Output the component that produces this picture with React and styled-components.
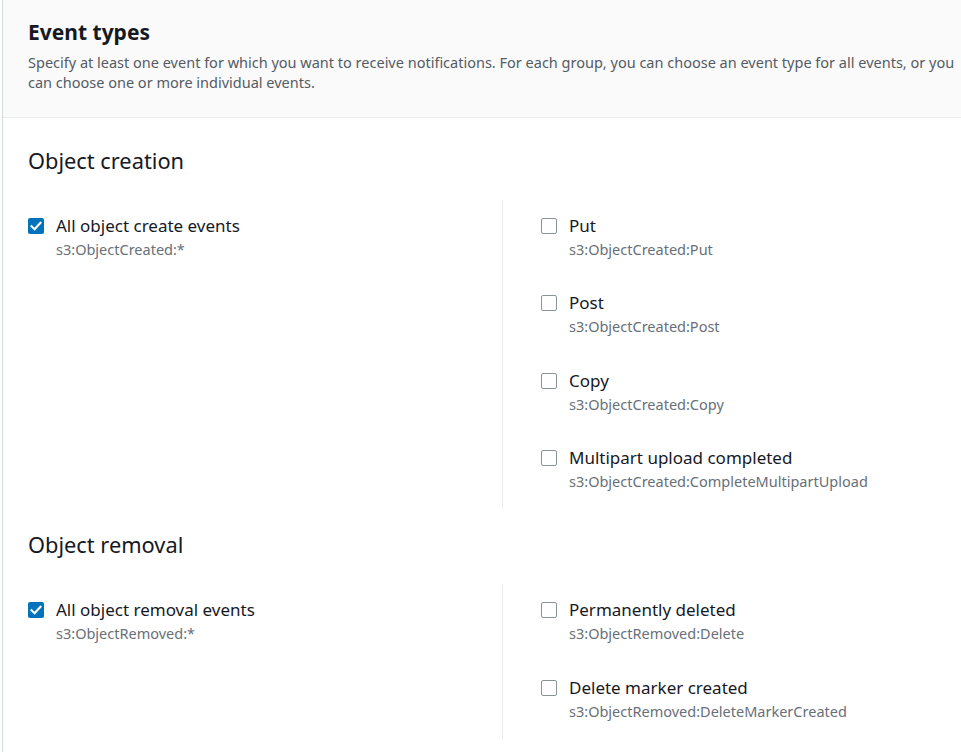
import React from "react";
import styled, { createGlobalStyle } from "styled-components";

const Global = createGlobalStyle`
  html, body { margin: 0; padding: 0; background: #ffffff; overflow: hidden; }
  body { font-family: "Noto Sans", "Open Sans", sans-serif; color: #16191f; }
  * { box-sizing: border-box; }
`;

const Card = styled.div`
  margin-left: 2px;
  width: 1000px;
  border-left: 1px solid #d5dbdb;
  min-height: 752px;
`;

const Header = styled.header`
  background: #fafafa;
  border-bottom: 1px solid #eaeded;
  padding: 18px 40px 25px 25px;
`;

const Title = styled.h2`
  margin: 0;
  font-size: 21px;
  line-height: 28px;
  font-weight: 700;
  color: #16191f;
`;

const Description = styled.p`
  margin: 6px 0 0;
  font-size: 14.5px;
  line-height: 20px;
  color: #545b64;
`;

const Body = styled.div`
  padding: 29px 0 0 25px;
`;

const Section = styled.section`
  & + & { margin-top: 22px; }
`;

const SectionTitle = styled.h3`
  margin: 0;
  font-size: 21.8px;
  line-height: 28px;
  font-weight: 400;
  color: #16191f;
`;

const Grid = styled.div`
  margin-top: 25px;
  display: grid;
  grid-template-columns: 474px 1fr;
`;

const Column = styled.div`
  display: flex;
  flex-direction: column;
  gap: 33.3px;
  padding: 15px 0 18.6px ${(p) => (p.$divided ? "38px" : "0")};
  border-left: ${(p) => (p.$divided ? "1px solid #eaeded" : "none")};
`;

const Item = styled.label`
  display: flex;
  align-items: flex-start;
  gap: 12px;
  cursor: pointer;
`;

const Box = styled.span`
  flex: none;
  width: 16px;
  height: 16px;
  margin-top: 3px;
  border-radius: 2px;
  border: ${(p) => (p.$checked ? "none" : "1.5px solid #879596")};
  background: ${(p) => (p.$checked ? "#0073bb" : "#ffffff")};
  display: flex;
  align-items: center;
  justify-content: center;
`;

const Texts = styled.div`
  display: flex;
  flex-direction: column;
  gap: 2px;
`;

const Label = styled.span`
  font-size: 17px;
  line-height: 22px;
  color: #16191f;
`;

const Code = styled.span`
  font-size: 14.5px;
  line-height: 20px;
  color: #687078;
`;

const Check = () => (
  <svg width="12" height="10" viewBox="0 0 12 10" fill="none">
    <path d="M1.5 5.2 L4.6 8.2 L10.5 1.8" stroke="#fff" strokeWidth="2.2" strokeLinecap="square" strokeLinejoin="miter" />
  </svg>
);

const Option = ({ label, code, checked }) => (
  <Item>
    <Box $checked={checked}>{checked && <Check />}</Box>
    <Texts>
      <Label>{label}</Label>
      <Code>{code}</Code>
    </Texts>
  </Item>
);

const groups = [
  {
    title: "Object creation",
    all: { label: "All object create events", code: "s3:ObjectCreated:*" },
    items: [
      { label: "Put", code: "s3:ObjectCreated:Put" },
      { label: "Post", code: "s3:ObjectCreated:Post" },
      { label: "Copy", code: "s3:ObjectCreated:Copy" },
      { label: "Multipart upload completed", code: "s3:ObjectCreated:CompleteMultipartUpload" },
    ],
  },
  {
    title: "Object removal",
    all: { label: "All object removal events", code: "s3:ObjectRemoved:*" },
    items: [
      { label: "Permanently deleted", code: "s3:ObjectRemoved:Delete" },
      { label: "Delete marker created", code: "s3:ObjectRemoved:DeleteMarkerCreated" },
    ],
  },
];

export default function App() {
  return (
    <>
      <Global />
      <Card>
        <Header>
          <Title>Event types</Title>
          <Description>
            Specify at least one event for which you want to receive notifications. For each group, you can choose an
            event type for all events, or you can choose one or more individual events.
          </Description>
        </Header>
        <Body>
          {groups.map((g) => (
            <Section key={g.title}>
              <SectionTitle>{g.title}</SectionTitle>
              <Grid>
                <Column>
                  <Option {...g.all} checked />
                </Column>
                <Column $divided>
                  {g.items.map((it) => (
                    <Option key={it.code} {...it} />
                  ))}
                </Column>
              </Grid>
            </Section>
          ))}
        </Body>
      </Card>
    </>
  );
}
